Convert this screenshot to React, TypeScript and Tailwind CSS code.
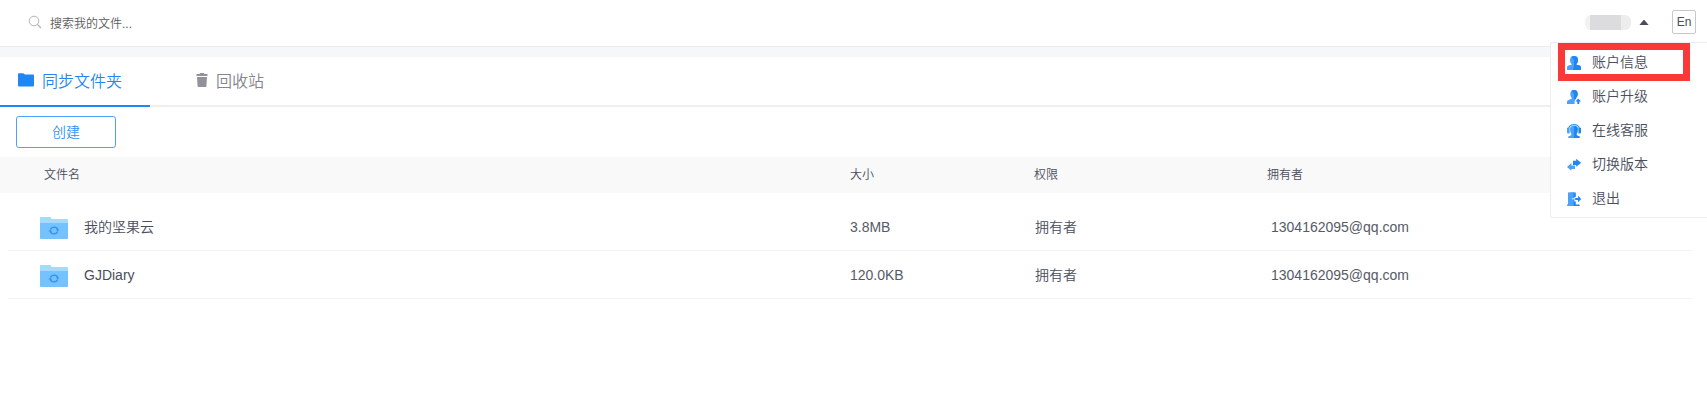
import type { ReactNode } from 'react';

const FOLDERS = [
  { name: '我的坚果云', size: '3.8MB', access: '拥有者', owner: '1304162095@qq.com' },
  { name: 'GJDiary', size: '120.0KB', access: '拥有者', owner: '1304162095@qq.com' },
];

function SearchIcon() {
  return (
    <svg className="block h-[14px] w-[14px]" viewBox="0 0 14 14" fill="none" stroke="#b4b4b4" strokeWidth="1">
      <circle cx="6" cy="6" r="4.8" />
      <path d="M9.4 9.4l3.6 3.6" strokeWidth="1.3" />
    </svg>
  );
}

function TabFolderIcon() {
  return (
    <svg className="block h-[14px] w-[16px]" viewBox="0 0 16 14" fill="#1f87f4">
      <path d="M0 1.2Q0 .3 .9 .3H5.2L7 1.4H15Q16 1.4 16 2.4V12.6Q16 13.6 15 13.6H1Q0 13.6 0 12.6Z" />
    </svg>
  );
}

function TrashIcon() {
  return (
    <svg className="block h-[14px] w-[12px]" viewBox="0 0 12 14" fill="#92929b">
      <path d="M3.8 0H8.2V1H11.5V3H.5V1H3.8ZM1 4H11L10.4 13.2Q10.3 14 9.5 14H2.5Q1.7 14 1.6 13.2Z" />
    </svg>
  );
}

function SyncFolderIcon() {
  return (
    <svg className="block h-[22px] w-[28px]" viewBox="0 0 28 22">
      <path d="M0 1Q0 0 1 0H10.5L11.5 2H27Q28 2 28 3V12H0Z" fill="#a3dbff" />
      <path d="M0 6H28V21Q28 22 27 22H1Q0 22 0 21Z" fill="#74c3ff" />
      <g fill="none" stroke="#2f8ff5" strokeWidth="1.3">
        <path d="M10.4 12.4A4 4 0 0 1 17.8 12.8" />
        <path d="M17.6 14.6A4 4 0 0 1 10.2 14.2" />
      </g>
      <path d="M16 12.6H19.4L17.8 14.6ZM8.6 14.4H12L10.2 12.4Z" fill="#2f8ff5" />
    </svg>
  );
}

function UserIcon() {
  return (
    <svg className="block h-[14px] w-[14px]" viewBox="0 0 14 14">
      <path d="M7 0C9.8 0 11 1.6 11 4.2C11 6.2 10.2 7 9.4 8V8.8L12.6 9.6Q14 10 14 11.6V14H0V11.6Q0 10 1.4 9.6L4.6 8.8V8C3.8 7 3 6.2 3 4.2C3 1.6 4.2 0 7 0Z" fill="#4ba2fb" />
      <path d="M7 0C9.8 0 11 1.6 11 4.2C11 6.2 10.2 7 9.4 8V8.8L12.6 9.6Q14 10 14 11.6V14H6L7 9V4L4.5 .8Q5.5 0 7 0Z" fill="#1f87f4" />
    </svg>
  );
}

function UpgradeIcon() {
  return (
    <svg className="block h-[14px] w-[14px]" viewBox="0 0 14 14">
      <path d="M7 0C9.6 0 10.8 1.6 10.8 4.1C10.8 6 9.9 7 9.1 8V8.6L7.6 11V14H0V12Q0 10.4 1.5 9.9L4.8 8.8V8C4 7 3.3 6.2 3.3 4.1C3.3 1.6 4.4 0 7 0Z" fill="#4ba2fb" />
      <path d="M7 0C9.6 0 10.8 1.6 10.8 4.1C10.8 6 9.9 7 9.1 8V8.8L7 9.5V4L4.7 .8Q5.6 0 7 0Z" fill="#1f87f4" />
      <path d="M11.3 8.6L14.2 11.6H12.3V14H10.3V11.6H8.4Z" fill="#1f87f4" />
    </svg>
  );
}

function SupportIcon() {
  return (
    <svg className="block h-[14px] w-[14px]" viewBox="0 0 14 14">
      <path d="M1.6 4.6C2.1 1.6 4.2 .6 7 .6S11.9 1.6 12.4 4.6" fill="none" stroke="#3a98fa" strokeWidth="1.2" />
      <path d="M0 3.8H2.6V9.4H1.2Q0 9.4 0 8.4ZM3 5.2Q3 1.8 7 1.8V14H1.2V12.6L4.2 11.2V9.6Q3 8 3 5.2Z" fill="#4ba2fb" />
      <path d="M14 3.8H11.4V9.4H12.8Q14 9.4 14 8.4ZM11 5.2Q11 1.8 7 1.8V14H12.8V12.6L9.8 11.2V9.6Q11 8 11 5.2Z" fill="#1f87f4" />
    </svg>
  );
}

function SwitchIcon() {
  return (
    <svg className="block h-[14px] w-[14px]" viewBox="0 0 14 14">
      <path d="M9.2 .8L14.2 4.8L9.2 8.8V6.9H6V2.8H9.2Z" fill="#1f87f4" />
      <path d="M4.4 5L0 9L4.4 12.8V11H8V7.4H4.4Z" fill="#4ba2fb" />
    </svg>
  );
}

function ExitIcon() {
  return (
    <svg className="block h-[14px] w-[14px]" viewBox="0 0 14 14">
      <path d="M1 .6L7 0V14H0V12.6H1Z" fill="#4ba2fb" />
      <path d="M6.6 .4H8.8V5H7.4V9.4H8.8V12.6H12.6V14H6.6Z" fill="#1f87f4" />
      <path d="M8.2 6H11V3.8L14.2 7L11 10.2V8H8.2Z" fill="#1f87f4" />
      <circle cx="6" cy="6.8" r=".8" fill="#fff" />
    </svg>
  );
}

const MENU: { label: string; icon: ReactNode }[] = [
  { label: '账户信息', icon: <UserIcon /> },
  { label: '账户升级', icon: <UpgradeIcon /> },
  { label: '在线客服', icon: <SupportIcon /> },
  { label: '切换版本', icon: <SwitchIcon /> },
  { label: '退出', icon: <ExitIcon /> },
];

function TopBar() {
  return (
    <header className="flex h-[47px] items-start justify-between border-b border-[#ececec] bg-white">
      <div className="flex items-start pl-7 pt-[15px]">
        <SearchIcon />
        <span className="ml-2 text-xs leading-[18px] text-[#5c5c5c]">搜索我的文件...</span>
      </div>
      <div className="flex items-center pr-[11px] pt-[10px]">
        <div className="flex h-[15px] w-[46px] overflow-hidden rounded-md">
          <span className="w-[5px] bg-[#f3f2f3]" />
          <span className="w-[31px] bg-[#dcdcde]" />
          <span className="flex-1 bg-[#ededee]" />
        </div>
        <svg className="ml-2 block h-[5px] w-[10px]" viewBox="0 0 10 5" fill="#4a4e5c">
          <path d="M4.6 0H5.4L9.6 5H.4Z" />
        </svg>
        <button className="ml-[23px] h-6 w-6 rounded-[2px] border border-[#c6c8cf] text-center text-xs leading-[23px] text-[#4a4e5c]">
          En
        </button>
      </div>
    </header>
  );
}

function AccountMenu() {
  return (
    <div className="absolute left-[1550px] top-[42px] h-[176px] w-[157px] rounded-l-[2px] border border-r-0 border-[#ededed] bg-white pt-[2px]">
      {MENU.map((item) => (
        <div key={item.label} className="flex h-[34px] items-center pl-4">
          <span className="pt-[2px]">{item.icon}</span>
          <span className="ml-[11px] text-sm leading-5">{item.label}</span>
        </div>
      ))}
      <div className="absolute left-[7px] top-0 h-[38px] w-[132px] border-[7px] border-[#fb3838]" />
    </div>
  );
}

export default function App() {
  return (
    <div className="relative h-[405px] w-[1707px] overflow-hidden bg-white font-['Liberation_Sans','Noto_Sans_CJK_SC',sans-serif] font-[350] text-[#4a4e5c]">
      <TopBar />
      <div className="h-[10px] bg-[#f6f7f9]" />
      <nav className="flex h-[50px] border-b-2 border-[#efefef] text-base leading-6">
        <div className="flex h-[50px] w-[150px] shrink-0 border-b-2 border-[#1f87f4] pl-[18px] pt-[13px] text-[#1f87f4]">
          <span className="pt-[3px]">
            <TabFolderIcon />
          </span>
          <span className="ml-2">同步文件夹</span>
        </div>
        <div className="flex pl-[46px] pt-[13px] text-[#84848a]">
          <span className="pt-[3px]">
            <TrashIcon />
          </span>
          <span className="ml-2">回收站</span>
        </div>
      </nav>
      <div className="flex h-[50px] pl-4 pt-[9px]">
        <button className="h-8 w-[100px] rounded-[3px] border border-[#4ba2fb] text-sm leading-[30px] text-[#3494f7]">创建</button>
      </div>
      <div className="grid h-9 grid-cols-[806px_184px_234px_1fr] items-center bg-[#f9f9f9] pl-[43px] text-xs">
        <span className="pl-px">文件名</span>
        <span className="pl-px">大小</span>
        <span className="pl-px">权限</span>
        <span>拥有者</span>
      </div>
      <div className="ml-2 mr-[15px] pt-[10px]">
        {FOLDERS.map((f) => (
          <div
            key={f.name}
            className="grid h-12 grid-cols-[810px_185px_236px_1fr] items-center border-b border-[#f3f3f3] pl-8 text-sm"
          >
            <div className="flex items-center">
              <span className="pt-[2px]">
                <SyncFolderIcon />
              </span>
              <span className="ml-4">{f.name}</span>
            </div>
            <span className="text-[#565a67]">{f.size}</span>
            <span>{f.access}</span>
            <span className="text-[#565a67]">{f.owner}</span>
          </div>
        ))}
      </div>
      <AccountMenu />
    </div>
  );
}
